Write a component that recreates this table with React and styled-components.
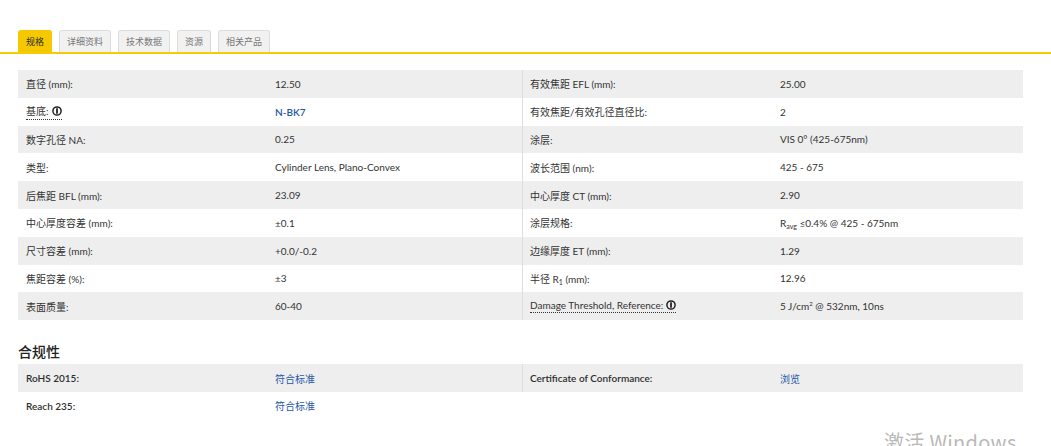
import React, { useState } from 'react';
import styled, { createGlobalStyle } from 'styled-components';

const Global = createGlobalStyle`
    html, body {
        margin: 0;
        padding: 0;
        background: #fff;
    }
    body {
        font-family: Lato, "Noto Sans CJK SC", sans-serif;
        color: #333;
        width: 1051px;
        height: 446px;
        overflow: hidden;
        position: relative;
    }
`;

const Page = styled.div`
    padding-top: 30px;
`;
const TabBar = styled.div`
    display: flex;
    align-items: flex-end;
    gap: 7px;
    padding-left: 18px;
    border-bottom: 2px solid #f6cd05;
`;
const Tab = styled.div`
    height: 22px;
    box-sizing: border-box;
    padding: 0 7px;
    display: flex;
    align-items: center;
    font-size: 9px;
    cursor: pointer;
    border-radius: 3px 3px 0 0;
    border: 1px solid ${p => (p.active ? '#f6c800' : '#dcdcdc')};
    border-bottom: none;
    background: ${p => (p.active ? '#f6c800' : '#f1f1f1')};
    color: ${p => (p.active ? '#2b2b2b' : '#777')};
`;
const Content = styled.div`
    padding: 16px 0 0 18px;
    width: 1005px;
`;
const Grid = styled.div`
    display: grid;
    grid-template-columns: 504px 501px;
    align-items: start;
`;
const Column = styled.div`
    border-left: ${p => (p.right ? '1px solid #dedede' : 'none')};
`;
const Row = styled.div`
    display: grid;
    grid-template-columns: 249px 1fr;
    height: 27.8px;
    align-items: center;
    background: ${p => (p.shade ? '#eeeeee' : '#fff')};
    font-size: 10px;
`;
const Label = styled.div`
    padding-left: ${p => (p.right ? '7px' : '8px')};
    color: ${p => (p.strong ? '#2e2e2e' : '#333')};
    font-weight: ${p => (p.strong ? 600 : 400)};
    display: flex;
    align-items: center;
    gap: 3px;
`;
const Value = styled.div`
    padding-left: 8px;
    color: #333;
`;
const Link = styled.a`
    color: #1f58a4;
    text-decoration: none;
    font-weight: ${p => (p.bold ? 600 : 400)};
    cursor: pointer;
`;
const Dotted = styled.span`
    border-bottom: 1px dotted #333;
    display: inline-flex;
    align-items: center;
    gap: 3px;
    padding-bottom: 1px;
`;
const Sub = styled.sub`
    font-size: 7px;
    vertical-align: -2px;
    line-height: 0;
`;
const Sup = styled.sup`
    font-size: 6px;
    vertical-align: 4px;
    line-height: 0;
`;
const Heading = styled.h3`
    margin: 23px 0 5px 0;
    font-size: 14px;
    line-height: 16px;
    font-weight: 500;
    color: #222;
    font-family: "Noto Sans CJK SC", sans-serif;
`;
const Watermark = styled.div`
    position: absolute;
    left: 884px;
    top: 427px;
    font-size: 20px;
    color: #b9b9b9;
    font-family: "Noto Sans CJK SC", sans-serif;
    letter-spacing: 0.3px;
    white-space: nowrap;
`;

const InfoIcon = () => (
    <svg width="10" height="10" viewBox="0 0 10 10">
        <circle cx="5" cy="5" r="4.1" fill="none" stroke="#222" strokeWidth="1.5" />
        <rect x="4.1" y="2.3" width="1.8" height="5.4" fill="#222" />
    </svg>
);

const left = [
    ['直径 (mm):', '12.50'],
    [<Dotted>基底: <InfoIcon /></Dotted>, <Link bold>N-BK7</Link>],
    ['数字孔径 NA:', '0.25'],
    ['类型:', 'Cylinder Lens, Plano-Convex'],
    ['后焦距 BFL (mm):', '23.09'],
    ['中心厚度容差 (mm):', '±0.1'],
    ['尺寸容差 (mm):', '+0.0/-0.2'],
    ['焦距容差 (%):', '±3'],
    ['表面质量:', '60-40'],
];
const right = [
    ['有效焦距 EFL (mm):', '25.00'],
    ['有效焦距/有效孔径直径比:', '2'],
    ['涂层:', 'VIS 0° (425-675nm)'],
    ['波长范围 (nm):', '425 - 675'],
    ['中心厚度 CT (mm):', '2.90'],
    ['涂层规格:', <span>R<Sub>avg</Sub> ≤0.4% @ 425 - 675nm</span>],
    ['边缘厚度 ET (mm):', '1.29'],
    [<span>半径 R<Sub>1</Sub> (mm):</span>, '12.96'],
    [<Dotted>Damage Threshold, Reference: <InfoIcon /></Dotted>, <span>5 J/cm<Sup>2</Sup> @ 532nm, 10ns</span>],
];

const tabs = ['规格', '详细资料', '技术数据', '资源', '相关产品'];

const App = () => {
    const [active, setActive] = useState(0);
    return (
        <Page>
            <Global />
            <TabBar>
                {tabs.map((t, i) => (
                    <Tab key={t} active={i === active} onClick={() => setActive(i)}>{t}</Tab>
                ))}
            </TabBar>
            <Content>
                <Grid>
                    <Column>
                        {left.map((r, i) => (
                            <Row key={i} shade={i % 2 === 0}>
                                <Label>{r[0]}</Label>
                                <Value>{r[1]}</Value>
                            </Row>
                        ))}
                    </Column>
                    <Column right>
                        {right.map((r, i) => (
                            <Row key={i} shade={i % 2 === 0}>
                                <Label right>{r[0]}</Label>
                                <Value>{r[1]}</Value>
                            </Row>
                        ))}
                    </Column>
                </Grid>
                <Heading>合规性</Heading>
                <Grid>
                    <Column>
                        <Row shade>
                            <Label strong>RoHS 2015:</Label>
                            <Value><Link>符合标准</Link></Value>
                        </Row>
                        <Row>
                            <Label strong>Reach 235:</Label>
                            <Value><Link>符合标准</Link></Value>
                        </Row>
                    </Column>
                    <Column right>
                        <Row shade>
                            <Label right strong>Certificate of Conformance:</Label>
                            <Value><Link>浏览</Link></Value>
                        </Row>
                    </Column>
                </Grid>
            </Content>
            <Watermark>激活 Windows</Watermark>
        </Page>
    );
};

export default App;
